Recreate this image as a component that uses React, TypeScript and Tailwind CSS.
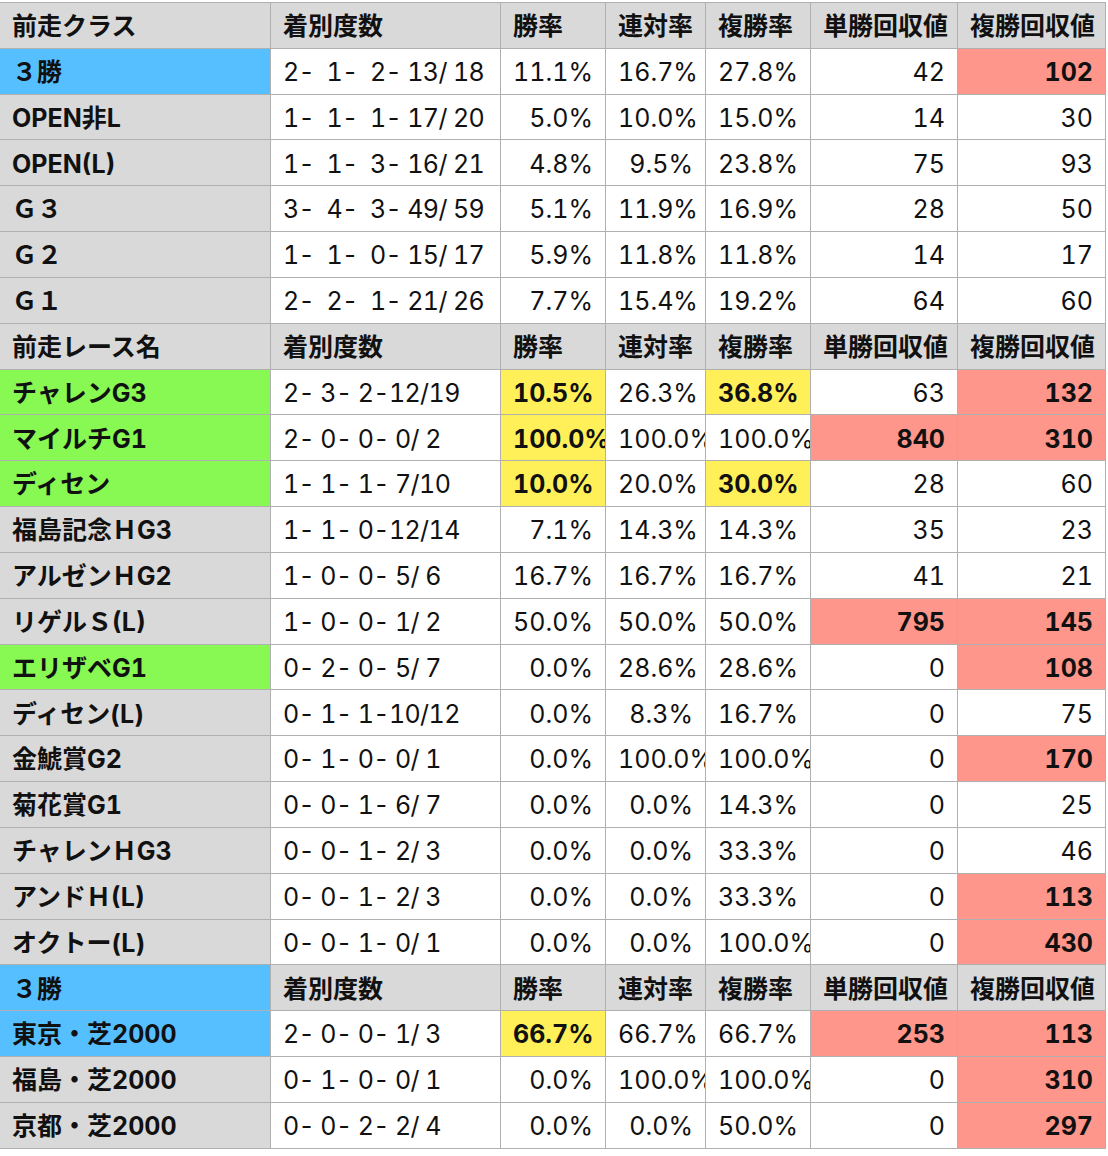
import React from "react";

type Tone = "gray" | "white" | "blue" | "green" | "yellow" | "pink";

type Cell = { v: string; tone?: Tone };

type Row = {
  header?: boolean;
  label: string;
  labelTone: Tone;
  cells: Cell[];
};

const toneClass: Record<Tone, string> = {
  gray: "bg-[#d9d9d9]",
  white: "bg-white",
  blue: "bg-[#56bfff]",
  green: "bg-[#88f852]",
  yellow: "bg-[#fff05a]",
  pink: "bg-[#ff968b]",
};

const HEAD = ["着別度数", "勝率", "連対率", "複勝率", "単勝回収値", "複勝回収値"];

const head = (label: string, labelTone: Tone = "gray"): Row => ({
  header: true,
  label,
  labelTone,
  cells: HEAD.map((v) => ({ v, tone: "gray" as Tone })),
});

const Y = (v: string): Cell => ({ v, tone: "yellow" });
const P = (v: string): Cell => ({ v, tone: "pink" });
const W = (v: string): Cell => ({ v });

const rows: Row[] = [
  head("前走クラス"),
  { label: "３勝", labelTone: "blue", cells: [W("2-  1-  2- 13/ 18"), W("11.1%"), W("16.7%"), W("27.8%"), W("42"), P("102")] },
  { label: "OPEN非L", labelTone: "gray", cells: [W("1-  1-  1- 17/ 20"), W("5.0%"), W("10.0%"), W("15.0%"), W("14"), W("30")] },
  { label: "OPEN(L)", labelTone: "gray", cells: [W("1-  1-  3- 16/ 21"), W("4.8%"), W("9.5%"), W("23.8%"), W("75"), W("93")] },
  { label: "Ｇ３", labelTone: "gray", cells: [W("3-  4-  3- 49/ 59"), W("5.1%"), W("11.9%"), W("16.9%"), W("28"), W("50")] },
  { label: "Ｇ２", labelTone: "gray", cells: [W("1-  1-  0- 15/ 17"), W("5.9%"), W("11.8%"), W("11.8%"), W("14"), W("17")] },
  { label: "Ｇ１", labelTone: "gray", cells: [W("2-  2-  1- 21/ 26"), W("7.7%"), W("15.4%"), W("19.2%"), W("64"), W("60")] },
  head("前走レース名"),
  { label: "チャレンG3", labelTone: "green", cells: [W("2- 3- 2-12/19"), Y("10.5%"), W("26.3%"), Y("36.8%"), W("63"), P("132")] },
  { label: "マイルチG1", labelTone: "green", cells: [W("2- 0- 0- 0/ 2"), Y("100.0%"), W("100.0%"), W("100.0%"), P("840"), P("310")] },
  { label: "ディセン", labelTone: "green", cells: [W("1- 1- 1- 7/10"), Y("10.0%"), W("20.0%"), Y("30.0%"), W("28"), W("60")] },
  { label: "福島記念ＨG3", labelTone: "gray", cells: [W("1- 1- 0-12/14"), W("7.1%"), W("14.3%"), W("14.3%"), W("35"), W("23")] },
  { label: "アルゼンＨG2", labelTone: "gray", cells: [W("1- 0- 0- 5/ 6"), W("16.7%"), W("16.7%"), W("16.7%"), W("41"), W("21")] },
  { label: "リゲルＳ(L)", labelTone: "gray", cells: [W("1- 0- 0- 1/ 2"), W("50.0%"), W("50.0%"), W("50.0%"), P("795"), P("145")] },
  { label: "エリザベG1", labelTone: "green", cells: [W("0- 2- 0- 5/ 7"), W("0.0%"), W("28.6%"), W("28.6%"), W("0"), P("108")] },
  { label: "ディセン(L)", labelTone: "gray", cells: [W("0- 1- 1-10/12"), W("0.0%"), W("8.3%"), W("16.7%"), W("0"), W("75")] },
  { label: "金鯱賞G2", labelTone: "gray", cells: [W("0- 1- 0- 0/ 1"), W("0.0%"), W("100.0%"), W("100.0%"), W("0"), P("170")] },
  { label: "菊花賞G1", labelTone: "gray", cells: [W("0- 0- 1- 6/ 7"), W("0.0%"), W("0.0%"), W("14.3%"), W("0"), W("25")] },
  { label: "チャレンＨG3", labelTone: "gray", cells: [W("0- 0- 1- 2/ 3"), W("0.0%"), W("0.0%"), W("33.3%"), W("0"), W("46")] },
  { label: "アンドＨ(L)", labelTone: "gray", cells: [W("0- 0- 1- 2/ 3"), W("0.0%"), W("0.0%"), W("33.3%"), W("0"), P("113")] },
  { label: "オクトー(L)", labelTone: "gray", cells: [W("0- 0- 1- 0/ 1"), W("0.0%"), W("0.0%"), W("100.0%"), W("0"), P("430")] },
  head("３勝", "blue"),
  { label: "東京・芝2000", labelTone: "blue", cells: [W("2- 0- 0- 1/ 3"), Y("66.7%"), W("66.7%"), W("66.7%"), P("253"), P("113")] },
  { label: "福島・芝2000", labelTone: "gray", cells: [W("0- 1- 0- 0/ 1"), W("0.0%"), W("100.0%"), W("100.0%"), W("0"), P("310")] },
  { label: "京都・芝2000", labelTone: "gray", cells: [W("0- 0- 2- 2/ 4"), W("0.0%"), W("0.0%"), W("50.0%"), W("0"), P("297")] },
];

export default function App() {
  return (
    <div className="min-h-[1156px] bg-white pt-[2px] font-['Inter','Noto_Sans_CJK_JP',sans-serif] text-[25px] tabular-nums text-[#111]">
      <div className="grid w-[1106px] auto-rows-[44.84px] grid-cols-[270px_229px_104px_99px_104px_146px_147px] gap-px bg-[#b0b0b0] py-px pr-px">
        {rows.map((r, i) => (
          <React.Fragment key={i}>
            <div
              className={`flex items-center overflow-hidden whitespace-pre pl-3 pt-[3px] font-bold ${toneClass[r.labelTone]}`}
            >
              {r.label}
            </div>
            {r.cells.map((c, j) => {
              const tone = c.tone ?? "white";
              const bold = r.header || tone !== "white";
              const align = r.header || j === 0 ? "text-left" : "text-right";
              const tight = !r.header && j === 0 ? "tracking-[-0.6px]" : "";
              return (
                <div
                  key={j}
                  className={`flex items-center overflow-hidden px-3 pt-[3px] ${toneClass[tone]}`}
                >
                  <div
                    className={`w-full whitespace-pre ${align} ${tight} ${bold ? "font-bold" : "font-normal"}`}
                  >
                    {c.v}
                  </div>
                </div>
              );
            })}
          </React.Fragment>
        ))}
      </div>
    </div>
  );
}
